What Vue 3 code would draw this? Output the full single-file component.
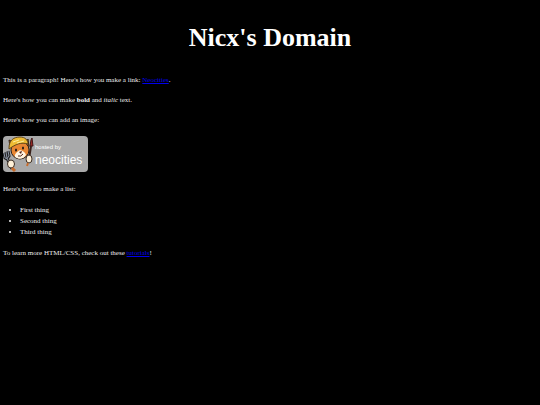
<script setup>
const things = ['First thing', 'Second thing', 'Third thing']
</script>

<template>
  <main class="page">
    <h1>Nicx's Domain</h1>

    <p>This is a paragraph! Here's how you make a link: <a href="#neocities">Neocities</a>.</p>

    <p>Here's how you can make <strong>bold</strong> and <em>italic</em> text.</p>

    <p>Here's how you can add an image:</p>

    <svg class="badge" viewBox="0 0 85 36" role="img" aria-label="hosted by neocities">
      <rect x="0" y="0" width="85" height="36" rx="4" fill="#a9a9a9" />
      <!-- cat -->
      <path d="M7 11 L6 4 L10 6 Z M22 8 L25 3 L26 11 Z" fill="#e07a22" stroke="#2b2118" stroke-width="1" />
      <ellipse cx="17" cy="14" rx="9" ry="9" fill="#e88632" stroke="#2b2118" stroke-width="1" />
      <path d="M17 14 C14 16 11 18 12 21 C16 24 21 23 23 19 C22 16 20 15 17 14 Z" fill="#fff3df" />
      <path d="M6 12 C6 4 11 1 17 1 C22 1 25 4 25 8 C18 6 13 8 6 13 Z" fill="#eebc35" stroke="#60451a" stroke-width="1" />
      <path d="M10 6 L16 4 M14 7 L21 5" stroke="#fff09a" stroke-width="1" />
      <ellipse cx="13" cy="14" rx="1" ry="1.5" fill="#241b18" />
      <ellipse cx="20" cy="12" rx="1" ry="1.5" fill="#241b18" />
      <path d="M16 16 L19 15 L18 18 Z" fill="#51231a" />
      <path d="M15 20 Q18 21 20 18" fill="none" stroke="#51231a" stroke-width="1" />
      <!-- fork -->
      <path d="M1 17 L2 22 Q4 24 6 20 L5 15 M3 16 L4 22 L9 33" fill="none" stroke="#222" stroke-width="3" />
      <path d="M1 17 L2 22 Q4 24 6 20 L5 15 M3 16 L4 22 L9 33" fill="none" stroke="#8c94a4" stroke-width="1" />
      <ellipse cx="8" cy="28" rx="3.5" ry="4" fill="#fff1d8" stroke="#3a2c23" stroke-width="1" />
      <path d="M9 32 L12 35" stroke="#c86c2b" stroke-width="3" />
      <!-- paintbrush -->
      <path d="M28 10 L26 23" stroke="#38201a" stroke-width="2" />
      <path d="M27 10 L28 4 L29 2 L30 10 Z" fill="#9c2924" stroke="#3d1717" stroke-width="1" />
      <ellipse cx="26" cy="23" rx="3" ry="4" fill="#fff1d8" stroke="#3a2c23" stroke-width="1" />
      <path d="M25 27 L24 30" stroke="#c86c2b" stroke-width="2" />
      <text class="hosted" x="32" y="13">hosted by</text>
      <text class="brand" x="32" y="28">neocities</text>
    </svg>

    <p>Here's how to make a list:</p>

    <ul>
      <li v-for="thing in things" :key="thing">{{ thing }}</li>
    </ul>

    <p>To learn more HTML/CSS, check out these <a href="#tutorials">tutorials</a>!</p>
  </main>
</template>

<style>
body {
  background-color: #000;
}
</style>

<style scoped>
.page {
  padding: 20px 3px;
  color: #eee;
  font-family: "Liberation Serif", "Times New Roman", serif;
  font-size: 7px;
  line-height: 11px;
}

h1 {
  margin: 0 0 19px;
  color: #fff;
  font-size: 26px;
  line-height: 36px;
  text-align: center;
}

p {
  margin: 0 0 9px;
}

ul {
  margin: 10px 0;
  padding-left: 17px;
}

a {
  color: #0000ee;
}

.badge {
  display: block;
  width: 85px;
  height: 36px;
  margin: 10px 0 12px;
}

.badge text {
  fill: #fff;
  font-family: "Liberation Sans", Arial, sans-serif;
}

.badge .hosted {
  font-size: 6px;
}

.badge .brand {
  font-size: 12px;
}
</style>
